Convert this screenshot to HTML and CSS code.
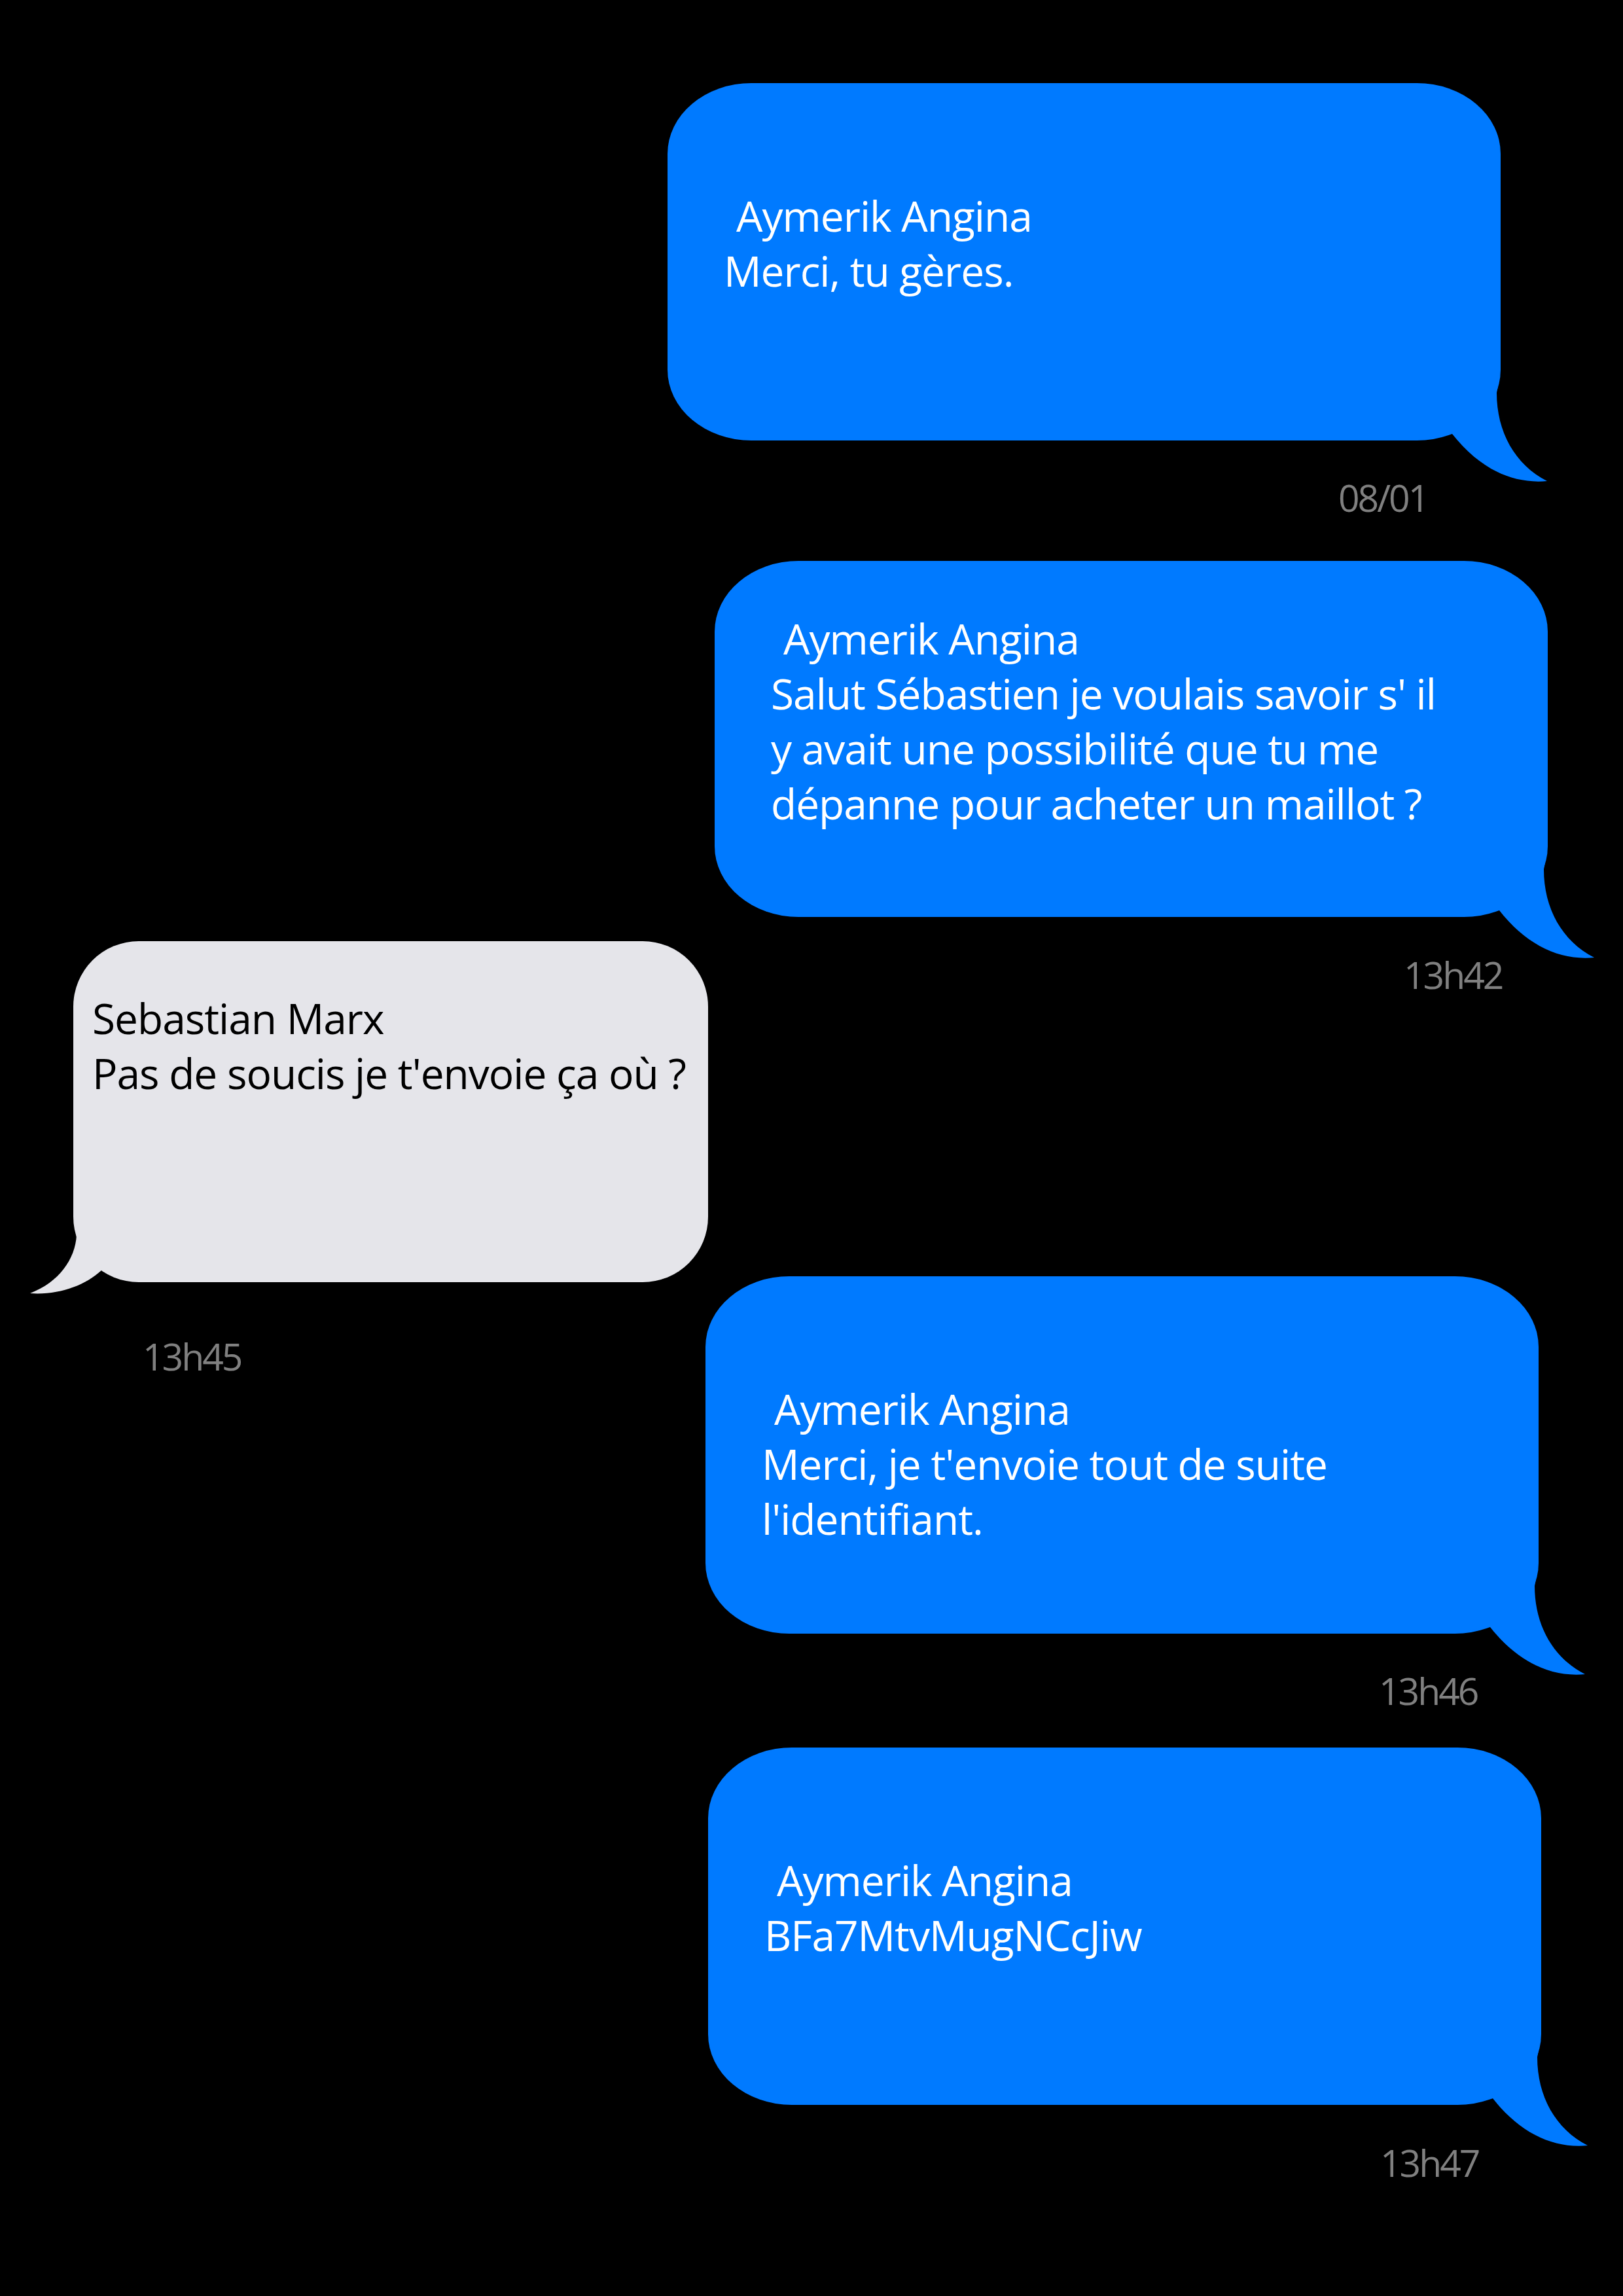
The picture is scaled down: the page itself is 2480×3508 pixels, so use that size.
FILE: index.html
```html
<!DOCTYPE html>
<html lang="fr">
<head>
<meta charset="utf-8">
<title>Conversation</title>
<link rel="stylesheet" href="styles.css">
</head>
<body>
<main class="thread">

  <section class="msg out m1">
    <div class="bubble blue b1">
      <p class="name indent">Aymerik Angina</p>
      <p class="text">Merci, tu gères.</p>
      <svg class="tail tail-right" viewBox="0 0 190 150" aria-hidden="true"><path d="M0,0 L109,0 L107,10 C107,70 135,120 184,145 C130,150 80,125 39,73 L0,78 Z"/></svg>
    </div>
    <div class="stamp s1">08/01</div>
  </section>

  <section class="msg out m2">
    <div class="bubble blue b2">
      <p class="name indent">Aymerik Angina</p>
      <p class="text">Salut Sébastien je voulais savoir s' il<br>y avait une possibilité que tu me<br>dépanne pour acheter un maillot ?</p>
      <svg class="tail tail-right" viewBox="0 0 190 150" aria-hidden="true"><path d="M0,0 L109,0 L107,10 C107,70 135,120 184,145 C130,150 80,125 39,73 L0,78 Z"/></svg>
    </div>
    <div class="stamp s2">13h42</div>
  </section>

  <section class="msg in m3">
    <div class="bubble grey b3">
      <p class="name">Sebastian Marx</p>
      <p class="text">Pas de soucis je t'envoie ça où ?</p>
      <svg class="tail tail-left" viewBox="0 0 200 110" aria-hidden="true"><path d="M87,0 L180,0 L180,70 L125,62 C100,85 60,100 16,97 C60,80 85,45 87,8 Z"/></svg>
    </div>
    <div class="stamp s3">13h45</div>
  </section>

  <section class="msg out m4">
    <div class="bubble blue b4">
      <p class="name indent">Aymerik Angina</p>
      <p class="text">Merci, je t'envoie tout de suite<br>l'identifiant.</p>
      <svg class="tail tail-right" viewBox="0 0 190 150" aria-hidden="true"><path d="M0,0 L109,0 L107,10 C107,70 135,120 184,145 C130,150 80,125 39,73 L0,78 Z"/></svg>
    </div>
    <div class="stamp s4">13h46</div>
  </section>

  <section class="msg out m5">
    <div class="bubble blue b5">
      <p class="name indent">Aymerik Angina</p>
      <p class="text">BFa7MtvMugNCcJiw</p>
      <svg class="tail tail-right" viewBox="0 0 190 150" aria-hidden="true"><path d="M0,0 L109,0 L107,10 C107,70 135,120 184,145 C130,150 80,125 39,73 L0,78 Z"/></svg>
    </div>
    <div class="stamp s5">13h47</div>
  </section>

</main>
</body>
</html>
```

FILE: styles.css
```css
html, body {
  margin: 0;
  padding: 0;
  background: #000;
}

body {
  width: 2480px;
  min-height: 3508px;
  font-family: "Open Sans", "Noto Sans", sans-serif;
}

.thread {
  display: flex;
  flex-direction: column;
  padding-top: 127px;
}

.msg {
  display: flex;
  flex-direction: column;
}

.msg.out {
  align-self: flex-end;
  width: 1273px;
}

.msg.in {
  align-self: flex-start;
  width: 970px;
  margin-left: 112px;
}

/* individual placement in the thread */
.m1 { margin-right: 187px; }
.m2 { margin-right: 115px; margin-top: 68px; }
.m3 { margin-top: -80px; }
.m4 { margin-right: 129px; margin-top: -151px; }
.m5 { margin-right: 125px; margin-top: 58px; }

.bubble {
  position: relative;
  box-sizing: border-box;
  height: 546px;
  font-size: 64px;
  line-height: 84px;
  letter-spacing: -1px;
}

.bubble p {
  margin: 0;
  position: relative;
  z-index: 1;
}

.blue {
  background: #007aff;
  color: #fff;
  border-radius: 128px / 108px;
  padding-left: 86px;
}

.grey {
  background: #e5e5ea;
  color: #000;
  border-radius: 100px;
  padding-left: 29px;
  height: 521px;
}

.b1, .b4, .b5 { padding-top: 161px; }
.b2 { padding-top: 77px; height: 544px; }
.b3 { padding-top: 76px; }

.name.indent { padding-left: 19px; }

.tail {
  position: absolute;
  display: block;
}

.blue .tail { fill: #007aff; }
.grey .tail { fill: #e5e5ea; }

.tail-right {
  left: calc(100% - 113px);
  top: calc(100% - 83px);
  width: 190px;
  height: 150px;
}

.tail-left {
  left: -82px;
  top: calc(100% - 80px);
  width: 200px;
  height: 110px;
}

.stamp {
  color: #808080;
  font-size: 57px;
  line-height: 58px;
  letter-spacing: -3px;
  margin-top: 58px;
}

.s1 { padding-left: 1025px; }
.s2 { padding-left: 1053px; margin-top: 59px; }
.s3 { padding-left: 106px; margin-top: 84px; }
.s4 { padding-left: 1029px; }
.s5 { padding-left: 1027px; margin-top: 59px; }
```
